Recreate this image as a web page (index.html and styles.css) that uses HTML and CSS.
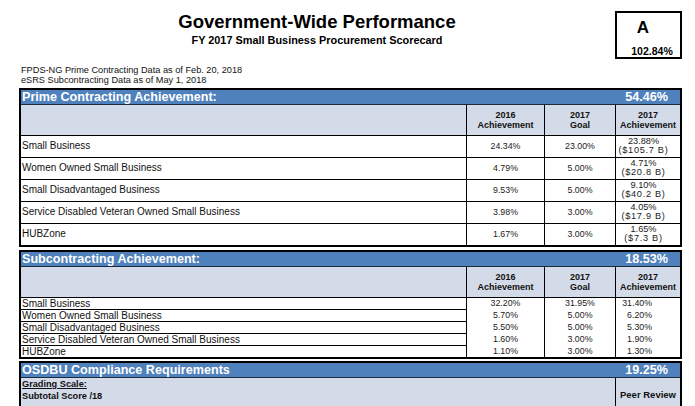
FILE: index.html
```html
<!DOCTYPE html>
<html lang="en">
<head>
<meta charset="utf-8">
<title>Government-Wide Performance</title>
<link rel="stylesheet" href="styles.css">
</head>
<body>
<div class="page">
  <header class="top">
    <div class="titles">
      <h1 class="title">Government-Wide Performance</h1>
      <h2 class="subtitle">FY 2017 Small Business Procurement Scorecard</h2>
    </div>
    <div class="grade">
      <div class="grade-letter">A</div>
      <div class="grade-pct">102.84%</div>
    </div>
  </header>

  <div class="notes">
    <p>FPDS-NG Prime Contracting Data as of Feb. 20, 2018</p>
    <p>eSRS Subcontracting Data as of May 1, 2018</p>
  </div>

  <section class="card prime">
    <div class="bar"><span>Prime Contracting Achievement:</span><span>54.46%</span></div>
    <div class="grid">
      <div class="hd"></div>
      <div class="hd">2016<br>Achievement</div>
      <div class="hd">2017<br>Goal</div>
      <div class="hd last">2017<br>Achievement</div>

      <div class="lbl">Small Business</div>
      <div class="num">24.34%</div>
      <div class="num">23.00%</div>
      <div class="num last two"><span>23.88%</span><span class="amt">($105.7 B)</span></div>

      <div class="lbl">Women Owned Small Business</div>
      <div class="num">4.79%</div>
      <div class="num">5.00%</div>
      <div class="num last two"><span>4.71%</span><span class="amt">($20.8 B)</span></div>

      <div class="lbl">Small Disadvantaged Business</div>
      <div class="num">9.53%</div>
      <div class="num">5.00%</div>
      <div class="num last two"><span>9.10%</span><span class="amt">($40.2 B)</span></div>

      <div class="lbl">Service Disabled Veteran Owned Small Business</div>
      <div class="num">3.98%</div>
      <div class="num">3.00%</div>
      <div class="num last two"><span>4.05%</span><span class="amt">($17.9 B)</span></div>

      <div class="lbl end">HUBZone</div>
      <div class="num end">1.67%</div>
      <div class="num end">3.00%</div>
      <div class="num last two end"><span>1.65%</span><span class="amt">($7.3 B)</span></div>
    </div>
  </section>

  <section class="card sub">
    <div class="bar"><span>Subcontracting Achievement:</span><span>18.53%</span></div>
    <div class="grid">
      <div class="hd"></div>
      <div class="hd">2016<br>Achievement</div>
      <div class="hd">2017<br>Goal</div>
      <div class="hd last">2017<br>Achievement</div>

      <div class="lbl">Small Business</div>
      <div class="num">32.20%</div>
      <div class="num">31.95%</div>
      <div class="num last right">31.40%</div>

      <div class="lbl">Women Owned Small Business</div>
      <div class="num">5.70%</div>
      <div class="num">5.00%</div>
      <div class="num last right">6.20%</div>

      <div class="lbl">Small Disadvantaged Business</div>
      <div class="num">5.50%</div>
      <div class="num">5.00%</div>
      <div class="num last right">5.30%</div>

      <div class="lbl">Service Disabled Veteran Owned Small Business</div>
      <div class="num">1.60%</div>
      <div class="num">3.00%</div>
      <div class="num last right">1.90%</div>

      <div class="lbl end">HUBZone</div>
      <div class="num">1.10%</div>
      <div class="num">3.00%</div>
      <div class="num last right">1.30%</div>
    </div>
  </section>

  <section class="card osdbu">
    <div class="bar"><span>OSDBU Compliance Requirements</span><span>19.25%</span></div>
    <div class="req">
      <div class="req-main">
        <p class="scale">Grading Scale:</p>
        <p>Subtotal Score /18</p>
      </div>
      <div class="req-side">
        <p>Peer Review</p>
      </div>
    </div>
  </section>
</div>
</body>
</html>
```

FILE: styles.css
```css
* { box-sizing: border-box; }

html, body {
  margin: 0;
  padding: 0;
  background: #ffffff;
}

body {
  font-family: "Liberation Sans", Arial, sans-serif;
  color: #111111;
  width: 695px;
  height: 406px;
  overflow: hidden;
}

p, h1, h2 { margin: 0; }

.page {
  padding-left: 19px;
  width: 682px;
}

/* ---------- header ---------- */
.top {
  display: flex;
  padding-top: 11px;
  width: 663px;
}

.titles {
  flex: 1;
  text-align: center;
}

.title {
  font-size: 18.5px;
  line-height: 21px;
  font-weight: bold;
  color: #000;
}

.subtitle {
  margin-top: 1.5px;
  font-size: 10.9px;
  line-height: 13px;
  font-weight: bold;
  color: #000;
}

.grade {
  width: 67px;
  height: 48px;
  border: 2px solid #000;
  text-align: center;
  color: #000;
}

.grade-letter {
  margin-top: 5px;
  padding-right: 11px;
  font-size: 17px;
  line-height: 20px;
  font-weight: bold;
}

.grade-pct {
  margin-top: 7px;
  padding-left: 7px;
  font-size: 10.5px;
  line-height: 12px;
  font-weight: bold;
}

/* ---------- notes ---------- */
.notes {
  margin-top: 5.8px;
  margin-bottom: 2.2px;
  padding-left: 2px;
  font-size: 9.2px;
  line-height: 10.5px;
}

/* ---------- cards ---------- */
.card {
  width: 663px;
  border: 2px solid #000;
}

.sub { margin-top: 3px; }
.osdbu { margin-top: 2px; }

.bar {
  display: flex;
  justify-content: space-between;
  height: 15px;
  padding: 0 12px 0 1px;
  background: #4f81bd;
  border-bottom: 1px solid #1c2a3d;
  color: #ffffff;
  font-size: 12.6px;
  line-height: 14px;
  font-weight: bold;
  white-space: nowrap;
}

.grid {
  display: grid;
  grid-template-columns: 446px 78px 71px 64px;
}

.hd {
  height: 31px;
  background: #d4dbe8;
  border-right: 1px solid #000;
  border-bottom: 1px solid #000;
  display: flex;
  align-items: center;
  justify-content: center;
  text-align: center;
  font-size: 9px;
  line-height: 10px;
  font-weight: bold;
  color: #111;
}

.lbl {
  display: flex;
  align-items: center;
  padding-left: 1px;
  border-right: 1px solid #000;
  border-bottom: 1px solid #000;
  font-size: 10px;
  white-space: nowrap;
}

.num {
  display: flex;
  align-items: center;
  justify-content: center;
  text-align: center;
  border-right: 1px solid #000;
  font-size: 8.8px;
  color: #222;
}

.last { border-right: none; }

/* prime rows */
.prime .lbl { height: 22px; line-height: 12px; }
.prime .num { border-bottom: 1px solid #000; height: 22px; }
.prime .lbl.end, .prime .num.end { border-bottom: none; height: 21px; }

.two {
  flex-direction: column;
  justify-content: center;
  padding-right: 9px;
  font-size: 9.2px;
  line-height: 9.6px;
  white-space: nowrap;
}

.amt { letter-spacing: 0.7px; }

/* sub rows */
.sub .lbl { height: 12px; line-height: 11px; }
.sub .lbl.end { height: 11px; border-bottom: none; }
.sub .num { line-height: 11px; }

.right {
  justify-content: flex-end;
  padding-right: 28px;
}

/* ---------- OSDBU ---------- */
.req {
  display: grid;
  grid-template-columns: 595px 64px;
  background: #d4dbe8;
  height: 40px;
}

.req-main {
  border-right: 1px solid #000;
  padding-left: 1px;
  font-size: 9.2px;
  line-height: 12px;
  font-weight: bold;
}

.scale { text-decoration: underline; }

.req-side {
  padding-top: 11px;
  text-align: center;
  font-size: 9.5px;
  line-height: 12px;
  font-weight: bold;
}
```
